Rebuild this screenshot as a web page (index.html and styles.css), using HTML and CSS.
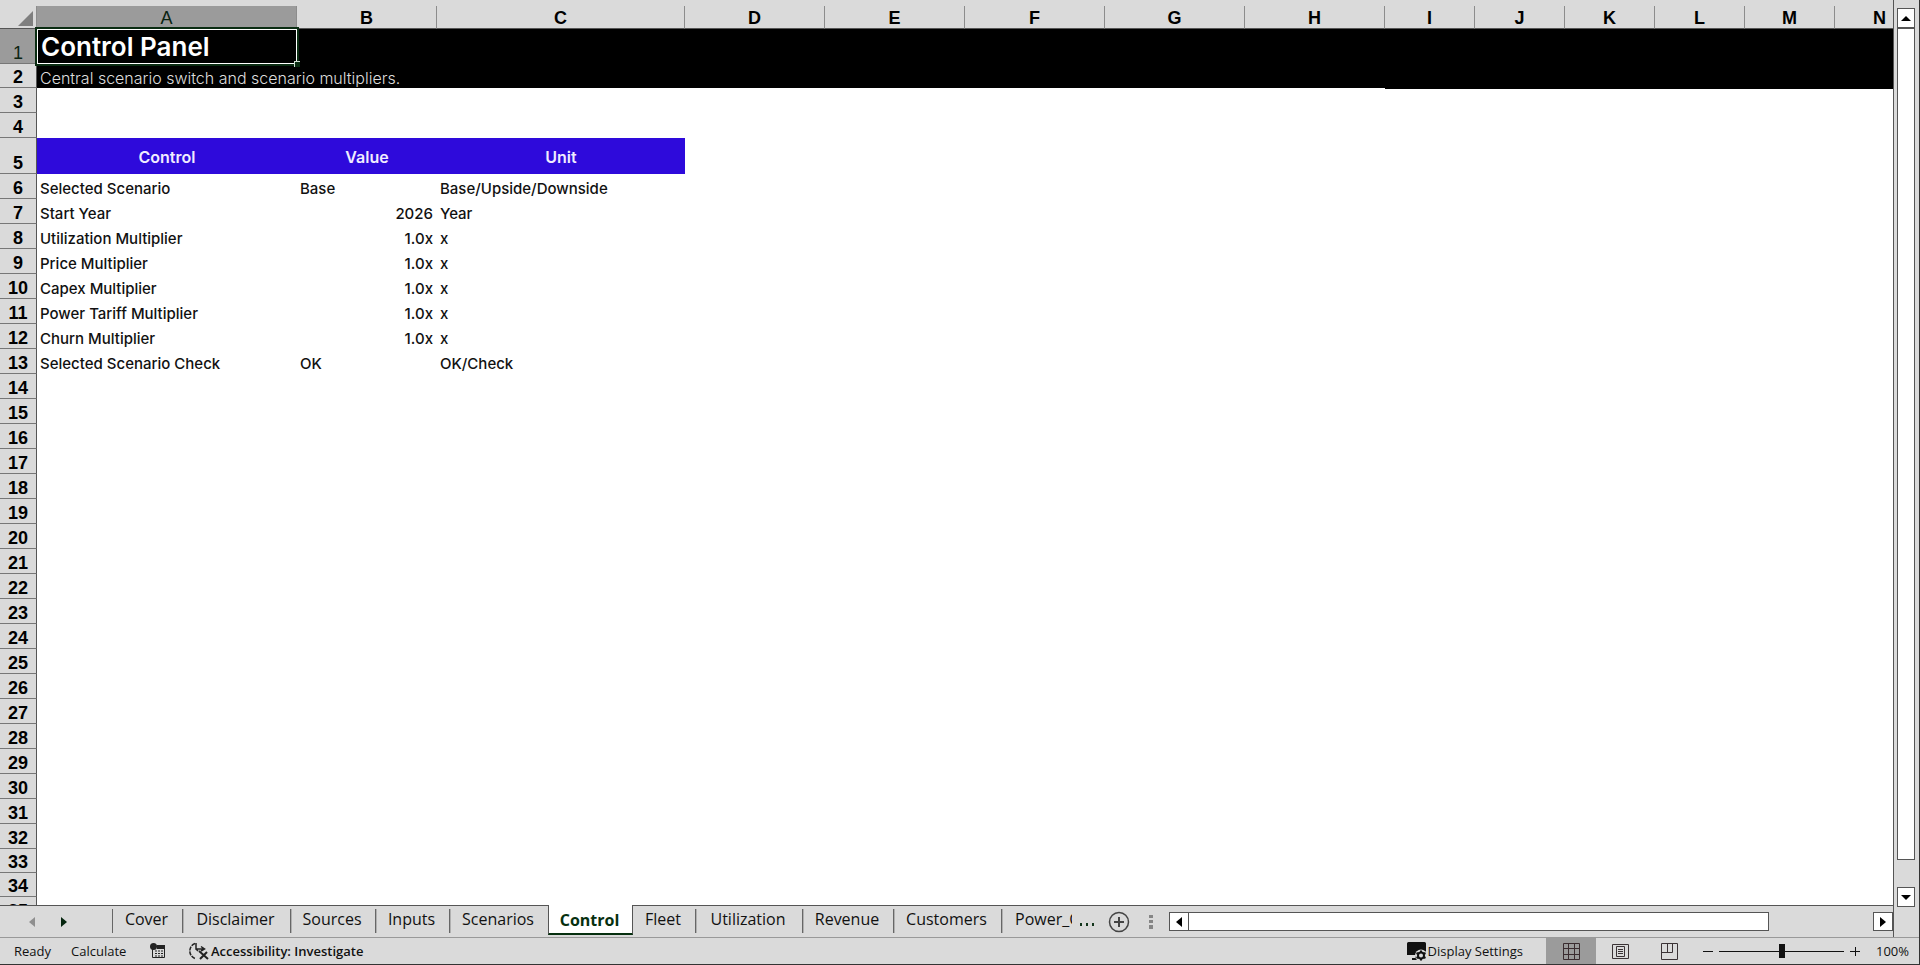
FILE: index.html
```html
<!DOCTYPE html>
<html lang="en">
<head>
    <meta charset="UTF-8">
    <title>Control Panel</title>
    <link rel="stylesheet" href="styles.css">
</head>
<body>

<div class="workbook">

    <!-- Worksheet grid -->
    <main class="sheet">
        <table class="grid">
            <colgroup>
                <col class="col-head">
                <col class="col-a">
                <col class="col-b">
                <col class="col-c">
                <col class="col-wide" span="5">
                <col class="col-narrow" span="6">
            </colgroup>
            <thead>
                <tr>
                    <th class="corner"><svg width="15" height="15" viewBox="0 0 15 15"><path d="M15 0v15H0z" fill="#7f7f7f"/></svg></th>
                    <th class="selected">A</th><th>B</th><th>C</th><th>D</th><th>E</th><th>F</th><th>G</th><th>H</th><th>I</th><th>J</th><th>K</th><th>L</th><th>M</th><th>N</th>
                </tr>
            </thead>
            <tbody>
                <tr class="row-title">
                    <th class="selected">1</th>
                    <td class="active-cell">Control Panel<span class="handle"></span></td>
                    <td colspan="13"></td>
                </tr>
                <tr class="row-subtitle"><th>2</th><td colspan="8">Central scenario switch and scenario multipliers.</td><td class="band-end" colspan="6"></td></tr>
                <tr><th>3</th><td colspan="14"></td></tr>
                <tr><th>4</th><td colspan="14"></td></tr>
                <tr class="row-labels"><th>5</th><td>Control</td><td>Value</td><td>Unit</td></tr>
                <tr><th>6</th><td>Selected Scenario</td><td>Base</td><td>Base/Upside/Downside</td></tr>
                <tr><th>7</th><td>Start Year</td><td class="number">2026</td><td>Year</td></tr>
                <tr><th>8</th><td>Utilization Multiplier</td><td class="number">1.0x</td><td>x</td></tr>
                <tr><th>9</th><td>Price Multiplier</td><td class="number">1.0x</td><td>x</td></tr>
                <tr><th>10</th><td>Capex Multiplier</td><td class="number">1.0x</td><td>x</td></tr>
                <tr><th>11</th><td>Power Tariff Multiplier</td><td class="number">1.0x</td><td>x</td></tr>
                <tr><th>12</th><td>Churn Multiplier</td><td class="number">1.0x</td><td>x</td></tr>
                <tr><th>13</th><td>Selected Scenario Check</td><td>OK</td><td>OK/Check</td></tr>
                <tr><th>14</th><td colspan="14"></td></tr>
                <tr><th>15</th><td colspan="14"></td></tr>
                <tr><th>16</th><td colspan="14"></td></tr>
                <tr><th>17</th><td colspan="14"></td></tr>
                <tr><th>18</th><td colspan="14"></td></tr>
                <tr><th>19</th><td colspan="14"></td></tr>
                <tr><th>20</th><td colspan="14"></td></tr>
                <tr><th>21</th><td colspan="14"></td></tr>
                <tr><th>22</th><td colspan="14"></td></tr>
                <tr><th>23</th><td colspan="14"></td></tr>
                <tr><th>24</th><td colspan="14"></td></tr>
                <tr><th>25</th><td colspan="14"></td></tr>
                <tr><th>26</th><td colspan="14"></td></tr>
                <tr><th>27</th><td colspan="14"></td></tr>
                <tr><th>28</th><td colspan="14"></td></tr>
                <tr><th>29</th><td colspan="14"></td></tr>
                <tr><th>30</th><td colspan="14"></td></tr>
                <tr><th>31</th><td colspan="14"></td></tr>
                <tr><th>32</th><td colspan="14"></td></tr>
                <tr class="row-short"><th>33</th><td colspan="14"></td></tr>
                <tr class="row-short"><th>34</th><td colspan="14"></td></tr>
                <tr><th>35</th><td colspan="14"></td></tr>
            </tbody>
        </table>
    </main>

    <!-- Vertical scrollbar -->
    <div class="vscroll">
        <button class="scroll-btn" aria-label="Scroll up"><svg width="10" height="5" viewBox="0 0 10 5"><path d="M5 0l5 5H0z"/></svg></button>
        <div class="vthumb"></div>
        <button class="scroll-btn" aria-label="Scroll down"><svg width="10" height="5" viewBox="0 0 10 5"><path d="M0 0h10L5 5z"/></svg></button>
    </div>

    <!-- Sheet tabs -->
    <div class="tabbar">
        <div class="tab-nav">
            <button aria-label="Previous sheet"><svg width="6" height="10" viewBox="0 0 6 10"><path d="M6 0v10L0 5z" fill="#8f8f8f"/></svg></button>
            <button aria-label="Next sheet"><svg width="6" height="10" viewBox="0 0 6 10"><path d="M0 0l6 5-6 5z" fill="#06260f"/></svg></button>
        </div>
        <nav class="tabs">
            <button class="tab first">Cover</button>
            <button class="tab">Disclaimer</button>
            <button class="tab">Sources</button>
            <button class="tab">Inputs</button>
            <button class="tab before-active">Scenarios</button>
            <button class="tab active">Control</button>
            <button class="tab">Fleet</button>
            <button class="tab">Utilization</button>
            <button class="tab">Revenue</button>
            <button class="tab">Customers</button>
            <button class="tab cut">Power_C</button>
        </nav>
        <button class="more" aria-label="More sheets"><svg width="14" height="3" viewBox="0 0 14 3"><path d="M0 0h2v3H0zM6 0h2v3H6zM12 0h2v3h-2z" fill="#12351b"/></svg></button>
        <button class="add" aria-label="New sheet"><svg width="22" height="22" viewBox="0 0 22 22" fill="none" stroke="#444"><circle cx="11" cy="11" r="9.5" stroke-width="1.5"/><path d="M11 6v10M6 11h10" stroke-width="2"/></svg></button>
        <svg class="grip" width="4" height="14" viewBox="0 0 4 14"><path d="M0 0h4v3H0zM0 5h4v3H0zM0 10h4v4H0z" fill="#858585"/></svg>
        <div class="hscroll">
            <button class="scroll-btn" aria-label="Scroll left"><svg width="6" height="10" viewBox="0 0 6 10"><path d="M6 0v10L0 5z"/></svg></button>
            <div class="hthumb"></div>
            <button class="scroll-btn" aria-label="Scroll right"><svg width="6" height="10" viewBox="0 0 6 10"><path d="M0 0l6 5-6 5z"/></svg></button>
        </div>
    </div>

    <!-- Status bar -->
    <footer class="status">
        <span class="ready">Ready</span>
        <span class="calculate">Calculate</span>
        <button class="macro" aria-label="Record macro">
            <svg width="16" height="16" viewBox="0 0 16 16"><path d="M2.500 3.500h12v11h-12z" fill="none" stroke="#222"/><path d="M7 2h8v4H7z" fill="#222"/><circle cx="3.500" cy="3.500" r="3.500" fill="#222"/><path d="M5 8h2M8 8h2M11 8h2M5 10.500h2M8 10.500h2M11 10.500h2M5 13h2M8 13h2M11 13h2" stroke="#222"/></svg>
        </button>
        <button class="access">
            <svg width="20" height="18" viewBox="0 0 20 18" fill="none" stroke="#222"><path d="M6 1.500A8 8 0 0 0 6 16.500" stroke-width="1.500" stroke-dasharray="4 1"/><path d="M7 1v6h8M12 4.500L15.500 7 12 9M7 7l2 2" stroke-width="1.500"/><path d="M10 9l9 8M18 10l-7 7" stroke-width="2"/></svg>
            Accessibility: Investigate
        </button>
        <button class="display">
            <svg width="20" height="19" viewBox="0 0 20 19"><path d="M1.500 0h16A1.500 1.500 0 0 1 19 1.500V13H0V1.500A1.500 1.500 0 0 1 1.500 0zM8 13h3v3h2v2H5v-2h3z" fill="#111"/><circle cx="14" cy="13.500" r="6" fill="#dadada"/><circle cx="14" cy="13.500" r="3" fill="none" stroke="#111" stroke-width="2"/><path d="M14 8.500v2M14 16.500v2M9.500 11l2 1M16.500 15l2 1M9.500 16l2-1M16.500 12l2-1" stroke="#111" stroke-width="2"/></svg>
            Display Settings
        </button>
        <button class="view on" aria-label="Normal view"><svg width="17" height="17" viewBox="0 0 17 17" fill="none" stroke="#3a2c30"><path d="M.5.5h16v16H.5zM.5 5.500h16M.5 11.500h16M5.500.5v16M11.500.5v16"/></svg></button>
        <button class="view" aria-label="Page layout view"><svg width="17" height="17" viewBox="0 0 17 17" fill="none" stroke="#3a3235"><path d="M.5 1.500h16v14H.5zM4.500 3.500h8v10h-8zM6 6.500h5M6 8.500h5M6 10.500h5"/></svg></button>
        <button class="view" aria-label="Page break view"><svg width="17" height="17" viewBox="0 0 17 17" fill="none" stroke="#3a3235"><path d="M.5.5h16v16H.5zM.5 9.500h11v-9M6.500.5v9"/></svg></button>
        <button class="zoom-btn" aria-label="Zoom out"><svg width="10" height="10" viewBox="0 0 10 10"><path d="M0 5.500h10" stroke="#111"/></svg></button>
        <input class="zoom" type="range" min="0" max="100" value="50" aria-label="Zoom">
        <button class="zoom-btn" aria-label="Zoom in"><svg width="10" height="10" viewBox="0 0 10 10"><path d="M0 5.500h10M5.500 1v9" stroke="#111"/></svg></button>
        <span class="percent">100%</span>
    </footer>

</div>

</body>
</html>
```
FILE: styles.css
```css
* {
    box-sizing: border-box;
}
body {
    margin: 0;
    background-color: #dadada;
    color: #111;
    font-family: "Open Sans", "Noto Sans", sans-serif;
}
button {
    padding: 0;
    border: none;
    background: none;
    color: inherit;
    font: inherit;
    display: flex;
    align-items: center;
    justify-content: center;
}
svg {
    display: block;
    flex: none;
}
.workbook {
    display: grid;
    grid-template-columns: minmax(0, 1fr) 26px;
    grid-template-rows: minmax(0, 1fr) 32px 28px;
    height: 100vh;
    border-right: 1px solid #333;
}

/* worksheet */
.sheet {
    grid-column: 1;
    grid-row: 1;
    overflow: hidden;
    padding-top: 6px;
}
.grid {
    width: 1925px;
    table-layout: fixed;
    border-collapse: separate;
    border-spacing: 0;
    background-color: #fff;
    font-family: Inter, sans-serif;
    font-size: 15px;
    font-weight: 500;
    line-height: 20px;
}
.col-head {
    width: 37px;
}
.col-a {
    width: 260px;
}
.col-b {
    width: 140px;
}
.col-c {
    width: 248px;
}
.col-wide {
    width: 140px;
}
.col-narrow {
    width: 90px;
}
.grid th {
    padding: 0;
    background-color: #dadada;
    color: #000;
    font-family: "Liberation Sans", Arial, sans-serif;
    font-size: 18px;
    font-weight: bold;
    line-height: 20px;
}
.grid thead th {
    height: 23px;
    padding-top: 2px;
    border-right: 1px solid #8c8c8c;
    border-bottom: 1px solid #555;
}
.grid tbody th {
    border-right: 1px solid #555;
    border-bottom: 1px solid #777;
    vertical-align: bottom;
}
.grid th.selected {
    background-color: #9b9b9b;
    color: #0b2412;
    font-weight: normal;
}
.grid .corner svg {
    margin-left: 18px;
}
.grid tbody tr {
    height: 25px;
}
.grid td {
    padding: 0 3px;
    vertical-align: bottom;
    white-space: nowrap;
}
.grid .number {
    padding-right: 4px;
    text-align: right;
}
.grid .row-title {
    height: 35px;
}
.row-title td,
.row-subtitle td {
    background-color: #000;
    color: #fff;
}
.row-title td {
    font-size: 26px;
    font-weight: 600;
    line-height: 34px;
}
.grid .active-cell {
    position: relative;
    border: 1px solid #fff;
    outline: 2px solid #0a2c12;
    line-height: 32px;
}
.handle {
    position: absolute;
    right: -4px;
    bottom: -4px;
    width: 6px;
    height: 6px;
    background-color: #0a2c12;
    border-top: 1px solid #cfe0d3;
    border-left: 1px solid #cfe0d3;
}
.grid .row-subtitle {
    height: 24px;
}
.row-subtitle td {
    color: #ddd;
    font-size: 16px;
    font-weight: 300;
}
.row-subtitle .band-end {
    box-shadow: 0 1px 0 #000;
}
.grid .row-labels {
    height: 36px;
}
.grid .row-labels td {
    padding-top: 2px;
    background-color: #2e0adb;
    color: #f0ecff;
    font-size: 16px;
    font-weight: 600;
    text-align: center;
    vertical-align: middle;
}
.grid .row-short {
    height: 24px;
}

/* scrollbars */
.vscroll {
    grid-column: 2;
    grid-row: 1 / 3;
    display: flex;
    flex-direction: column;
    padding: 8px 4px 30px 3px;
    border-left: 1px solid #555;
}
.scroll-btn {
    flex: none;
    width: 20px;
    height: 19px;
    background-color: #fff;
    border: 1px solid #555;
}
.vscroll .scroll-btn {
    width: 100%;
    height: 20px;
}
.vthumb {
    flex: 1;
    margin-bottom: 27px;
    background-color: #fff;
    border: 1px solid #555;
}
.hscroll {
    flex: 1;
    display: flex;
    margin-left: 16px;
}
.hthumb {
    flex: 1;
    margin-right: 104px;
    background-color: #fff;
    border: 1px solid #555;
    border-left: none;
}

/* sheet tabs */
.tabbar {
    grid-column: 1;
    grid-row: 2;
    display: flex;
    align-items: center;
    border-top: 1px solid #555;
}
.tab-nav {
    display: flex;
    gap: 26px;
    width: 112px;
    padding-left: 29px;
}
.tabs {
    align-self: stretch;
    display: grid;
    grid-template-columns: 71px 108px 85px 74px 98px 85px 63px 107px 91px 108px 70px;
    font-size: 16px;
    line-height: 22px;
}
.tab {
    height: 24px;
    margin-top: 3px;
    padding-right: 2px;
    padding-bottom: 4px;
    border-right: 1px solid #666;
    box-shadow: 1px 0 0 #b0b0b0;
}
.tab.first {
    border-left: 1px solid #666;
}
.tab.before-active {
    border-right: none;
    box-shadow: none;
}
.tab.active {
    height: 30px;
    margin-top: -1px;
    padding-top: 2px;
    padding-bottom: 0;
    background-color: #fff;
    border-right: 1px solid #555;
    border-left: 1px solid #555;
    border-bottom: 2px solid #06300f;
    box-shadow: none;
    color: #06300f;
    font-weight: bold;
}
.tab.cut {
    width: 57px;
    margin-left: 13px;
    padding-right: 0;
    justify-content: flex-start;
    overflow: hidden;
    border-right: none;
    box-shadow: none;
}
.more {
    margin-top: 6px;
    margin-left: 8px;
}
.add {
    margin-left: 14px;
}
.grip {
    margin-left: 19px;
}

/* status bar */
.status {
    grid-column: 1 / 3;
    grid-row: 3;
    display: flex;
    align-items: center;
    padding-left: 14px;
    border-top: 1px solid #999;
    border-bottom: 1px solid #333;
    font-size: 13px;
    line-height: 18px;
}
.ready {
    width: 57px;
}
.calculate {
    width: 79px;
}
.macro {
    margin-right: 23px;
}
.access {
    gap: 2px;
    font-weight: 600;
}
.display {
    gap: 1px;
    margin-left: auto;
    margin-right: 23px;
}
.view {
    align-self: stretch;
    width: 49px;
}
.view.on {
    width: 50px;
    background-color: #9b9b9b;
}
.zoom-btn {
    margin-left: 6px;
}
.view + .zoom-btn {
    margin-left: 9px;
}
.zoom {
    appearance: none;
    width: 125px;
    height: 14px;
    margin: 0 0 0 6px;
    background: linear-gradient(#111, #111) center / 100% 1px no-repeat;
}
.zoom::-webkit-slider-thumb {
    appearance: none;
    width: 6px;
    height: 14px;
    background-color: #111;
}
.percent {
    width: 59px;
    padding-left: 16px;
}
```
